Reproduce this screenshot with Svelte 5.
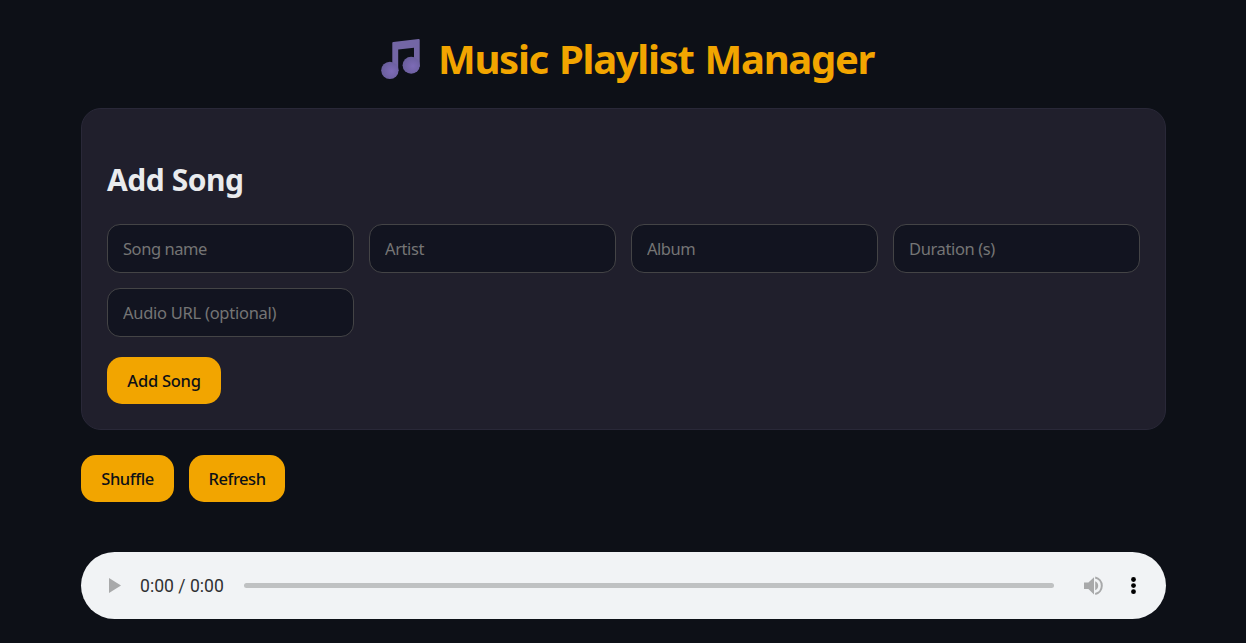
<script>
  const fields = [
    { label: 'Song name', spacing: -0.45 },
    { label: 'Artist', spacing: -0.4 },
    { label: 'Album', spacing: -0.5 },
    { label: 'Duration (s)', spacing: -0.38 },
    { label: 'Audio URL (optional)', spacing: -0.27 }
  ];
</script>

<main>
  <h1>
    <svg class="note" width="40" height="40" viewBox="0 0 40 40" aria-hidden="true">
      <defs>
        <radialGradient id="head" cx=".6" cy=".55" r=".6">
          <stop offset="0" stop-color="#7d6bb6" />
          <stop offset="1" stop-color="#695e9c" />
        </radialGradient>
      </defs>
      <path d="M11.3 4Q11.3 3 12.3 2.9L37.6 .1Q38.7 0 38.7 1V28H33V8.8L17.2 10.6V32H11.3Z" fill="#7366a5" />
      <ellipse cx="8.9" cy="31.3" rx="8.7" ry="8.6" fill="url(#head)" />
      <ellipse cx="30.2" cy="26.3" rx="8.6" ry="8.5" fill="url(#head)" />
    </svg>
    <span>Music Playlist Manager</span>
  </h1>

  <section class="card">
    <h2>Add Song</h2>
    <div class="grid">
      {#each fields as f}
        <input type="text" placeholder={f.label} style="letter-spacing: {f.spacing}px" />
      {/each}
    </div>
    <button class="add">Add Song</button>
  </section>

  <div class="actions">
    <button class="shuffle">Shuffle</button>
    <button class="refresh">Refresh</button>
  </div>

  <div class="player">
    <svg class="play" width="12" height="15" viewBox="0 0 12 15"><path d="M0 0 12 7.5 0 15Z" fill="#a8a9aa" /></svg>
    <span class="time">0:00 / 0:00</span>
    <div class="track"></div>
    <svg class="volume" width="20" height="20" viewBox="0 0 20 20">
      <path d="M0 6.6H4.4L10 1.2V18.4L4.4 13H0Z" fill="#a8a9aa" />
      <path d="M11.2 5.3C13 6.2 14.2 7.8 14.2 9.8S13 13.4 11.2 14.3Z" fill="#a8a9aa" />
      <path d="M11.2 1.6C15 2.4 17.8 5.8 17.8 9.8S15 17.2 11.2 18" fill="none" stroke="#a8a9aa" stroke-width="2" />
    </svg>
    <svg class="more" width="6" height="18" viewBox="0 0 6 18"><circle cx="2.5" cy="2.5" r="2.4" /><circle cx="2.5" cy="8.6" r="2.4" /><circle cx="2.5" cy="14.7" r="2.4" /></svg>
  </div>
</main>

<style>
  :global(body) { background: #0d1017; }
  main {
    box-sizing: border-box;
    height: 643px;
    padding: 32px 80px 0 81px;
    overflow: hidden;
    font-family: "Noto Sans", sans-serif;
    color: #e9ebee;
  }
  h1 {
    display: flex;
    align-items: center;
    height: 54px;
    margin: 0 0 22px;
    padding-left: 300px;
    gap: 17px;
    color: #f2a500;
    font-size: 40px;
    line-height: 54px;
    letter-spacing: -1.3px;
    word-spacing: 2px;
    white-space: nowrap;
  }
  h1 span { padding-bottom: 1px; }
  .note { flex: none; }
  .card {
    box-sizing: border-box;
    height: 322px;
    padding: 51px 25px 0;
    border: 1px solid #292838;
    border-radius: 20px;
    background: #201f2c;
  }
  h2 { margin: 0 0 24px; height: 40px; font-size: 30px; line-height: 40px; letter-spacing: -0.45px; }
  .grid { display: grid; grid-template-columns: repeat(4, 247px); gap: 15px; }
  input {
    box-sizing: border-box;
    width: 247px;
    height: 49px;
    padding: 0 15px;
    border: 1px solid #444446;
    border-radius: 13px;
    outline: none;
    background: #121420;
    color: #e9ebee;
    font: 16.5px "Noto Sans", sans-serif;
  }
  input::placeholder { color: #757575; opacity: 1; }
  button {
    display: block;
    height: 47px;
    padding: 0;
    border: 0;
    border-radius: 15px;
    background: #f2a500;
    color: #0d1017;
    font: 550 16.5px "Noto Sans", sans-serif;
    letter-spacing: -0.45px;
  }
  .add { width: 114px; margin-top: 20px; letter-spacing: -0.25px; }
  .actions { display: flex; gap: 15px; margin-top: 25px; }
  .shuffle { width: 93px; }
  .refresh { width: 96px; }
  .player {
    box-sizing: border-box;
    display: flex;
    align-items: center;
    height: 67px;
    margin-top: 50px;
    padding: 0 29.5px 0 28px;
    border-radius: 34px;
    background: #f1f3f5;
  }
  .time { width: 104px; margin-left: 19px; color: #303132; font: 17.6px Roboto, sans-serif; white-space: nowrap; }
  .track { flex: 1; height: 5px; border-radius: 3px; background: #bfc1c2; }
  .volume { margin-left: 30px; }
  .more { margin-left: 26.5px; }
</style>
